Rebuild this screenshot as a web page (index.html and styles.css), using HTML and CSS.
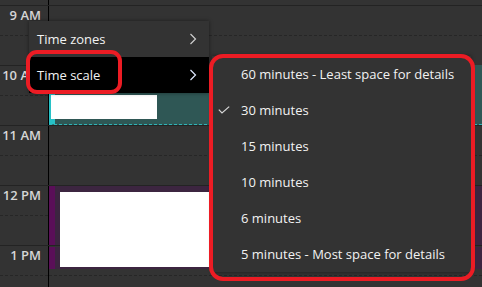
FILE: index.html
```html
<!DOCTYPE html>
<html>
<head>
<meta charset="utf-8">
<link rel="stylesheet" href="styles.css">
</head>
<body>
<div class="cal">
  <div class="row top"><div class="g"></div><div class="c"></div></div>
  <div class="row"><div class="g"><div class="half"><span class="lbl">9 AM</span></div></div><div class="c"><div class="half"></div></div></div>
  <div class="row"><div class="g"><div class="half"><span class="lbl">10 AM</span></div></div><div class="c"><div class="half"></div></div></div>
  <div class="row"><div class="g"><div class="half"><span class="lbl">11 AM</span></div></div><div class="c"><div class="half"></div></div></div>
  <div class="row"><div class="g"><div class="half"><span class="lbl">12 PM</span></div></div><div class="c"><div class="half"></div></div></div>
  <div class="row"><div class="g"><div class="half"><span class="lbl">1 PM</span></div></div><div class="c"><div class="half"></div></div></div>

  <div class="event teal"><div class="redact r1"></div></div>
  <div class="event purple p1"></div>
  <div class="event purple p2"></div>
  <div class="redact r2"></div>

  <div class="menu main">
    <div class="item"><span>Time zones</span><svg class="chev" width="8" height="12" viewBox="0 0 8 12"><polyline points="1.5,1 6.5,6 1.5,11" fill="none" stroke="#cfcfcf" stroke-width="1.2"/></svg></div>
    <div class="item sel"><span>Time scale</span><svg class="chev" width="8" height="12" viewBox="0 0 8 12"><polyline points="1.5,1 6.5,6 1.5,11" fill="none" stroke="#dfe8ff" stroke-width="1.2"/></svg></div>
  </div>

  <div class="menu sub">
    <div class="item"><span class="chk"></span><span>60 minutes - Least space for details</span></div>
    <div class="item"><span class="chk"><svg width="12" height="8" viewBox="0 0 12 8"><polyline points="0.8,3.6 4,7 11.2,0.6" fill="none" stroke="#d8d8d8" stroke-width="1.2"/></svg></span><span>30 minutes</span></div>
    <div class="item"><span class="chk"></span><span>15 minutes</span></div>
    <div class="item"><span class="chk"></span><span>10 minutes</span></div>
    <div class="item"><span class="chk"></span><span>6 minutes</span></div>
    <div class="item"><span class="chk"></span><span>5 minutes - Most space for details</span></div>
  </div>

  <div class="mark m1"></div>
  <div class="mark m2"></div>
</div>
</body>
</html>
```

FILE: styles.css
```css
* { box-sizing: border-box; }
html, body { margin: 0; padding: 0; }
body { background: #333333; font-family: "Open Sans", "Noto Sans", sans-serif; }
.cal { position: relative; width: 482px; height: 287px; overflow: hidden; background: #333333; }
.row { display: grid; grid-template-columns: 49px 1fr; height: 60px; border-top: 1px solid #232323; }
.row.top { height: 5px; border-top: none; }
.g { border-right: 1px solid #000; min-width: 0; }
.half { height: 30px; border-bottom: 1px dashed #262626; }
.g .half { display: flex; justify-content: flex-end; padding: 1px 7px 0 0; }
.lbl { font-size: 13px; font-weight: 600; color: #d6d6d6; line-height: 16px; white-space: nowrap; }

.event { position: absolute; left: 49px; right: 0; }
.teal { top: 65px; height: 60px; background: #2f5755; border-left: 6px solid #27c1c6; border-bottom: 1px dashed #2fb5b8; }
.r1 { position: absolute; left: -4px; top: 30px; width: 106px; height: 24px; background: #fff; }
.purple { background: #3c2540; border-left: 6px solid #5a0f58; }
.p1 { top: 186px; height: 59px; }
.p2 { top: 247px; height: 22px; }
.redact { background: #fff; }
.r2 { position: absolute; left: 60px; top: 192px; width: 149px; height: 75px; }

.menu { position: absolute; background: #333333; color: #f2f2f2; font-size: 13px; box-shadow: 0 0 4px rgba(0,0,0,0.45); }
.menu .item { height: 36px; display: flex; align-items: center; }
.main { left: 29px; top: 21px; width: 180px; }
.main .item { justify-content: space-between; padding: 0 12px 0 8px; }
.main .sel { background: #000; }
.chev { display: block; }
.sub { left: 212px; top: 56px; width: 259px; }
.sub .item { padding-left: 6px; }
.chk { width: 23px; display: flex; align-items: center; }

.mark { position: absolute; border: 4px solid #ec1c24; }
.m1 { left: 26px; top: 50px; width: 96px; height: 44px; border-radius: 11px; }
.m2 { left: 209px; top: 54px; width: 266px; height: 227px; border-radius: 14px; }
```
